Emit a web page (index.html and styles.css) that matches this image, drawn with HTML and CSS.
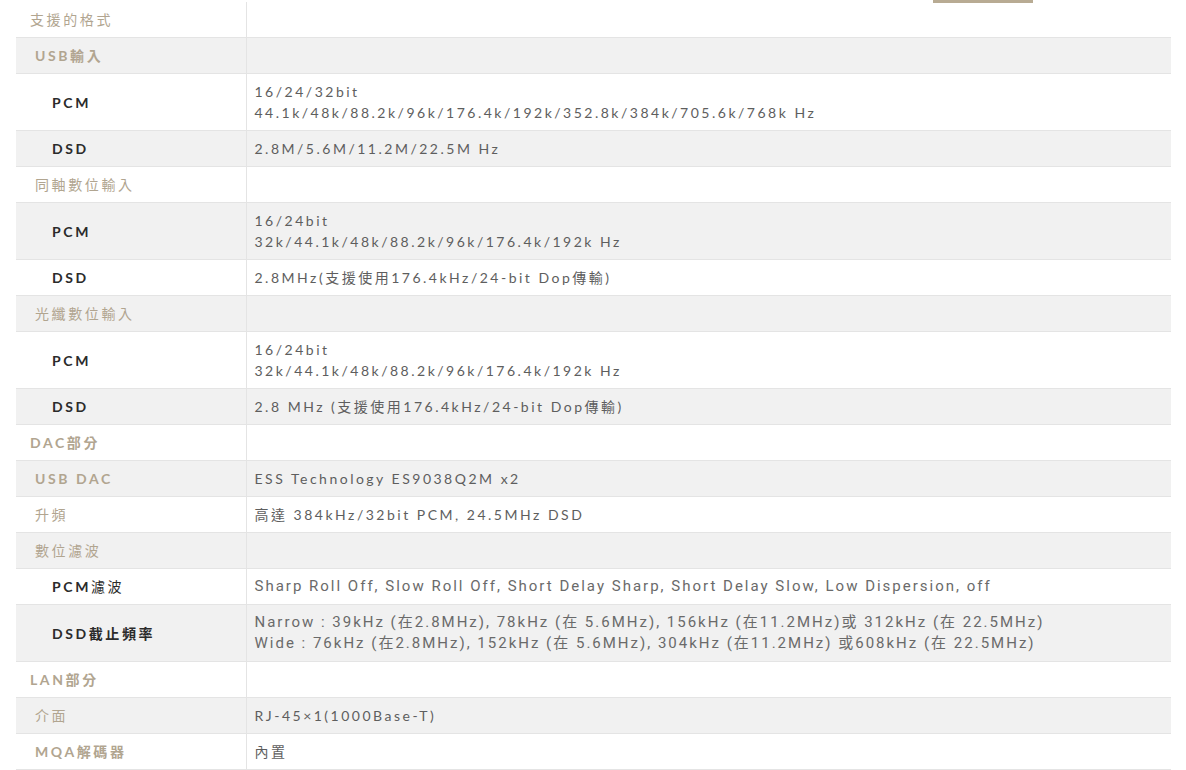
FILE: index.html
```html
<!DOCTYPE html>
<html lang="zh-Hant">
<head>
    <meta charset="UTF-8">
    <meta name="viewport" content="width=device-width, initial-scale=1.0">
    <title>規格</title>
    <link rel="stylesheet" href="styles.css">
</head>
<body>

<div class="tab-marker"></div>

<table class="spec-table">
    <tr class="section">
        <th>支援的格式</th>
        <td></td>
    </tr>
    <tr class="group">
        <th><b>USB輸入</b></th>
        <td></td>
    </tr>
    <tr class="item">
        <th><b>PCM</b></th>
        <td>16/24/32bit<br>44.1k/48k/88.2k/96k/176.4k/192k/352.8k/384k/705.6k/768k Hz</td>
    </tr>
    <tr class="item">
        <th><b>DSD</b></th>
        <td>2.8M/5.6M/11.2M/22.5M Hz</td>
    </tr>
    <tr class="group">
        <th>同軸數位輸入</th>
        <td></td>
    </tr>
    <tr class="item">
        <th><b>PCM</b></th>
        <td>16/24bit<br>32k/44.1k/48k/88.2k/96k/176.4k/192k Hz</td>
    </tr>
    <tr class="item">
        <th><b>DSD</b></th>
        <td>2.8MHz(支援使用176.4kHz/24-bit Dop傳輸)</td>
    </tr>
    <tr class="group">
        <th>光纖數位輸入</th>
        <td></td>
    </tr>
    <tr class="item">
        <th><b>PCM</b></th>
        <td>16/24bit<br>32k/44.1k/48k/88.2k/96k/176.4k/192k Hz</td>
    </tr>
    <tr class="item">
        <th><b>DSD</b></th>
        <td>2.8 MHz (支援使用176.4kHz/24-bit Dop傳輸)</td>
    </tr>
    <tr class="section">
        <th><b>DAC部分</b></th>
        <td></td>
    </tr>
    <tr class="group">
        <th><b>USB DAC</b></th>
        <td>ESS Technology ES9038Q2M x2</td>
    </tr>
    <tr class="group">
        <th>升頻</th>
        <td>高達 384kHz/32bit PCM, 24.5MHz DSD</td>
    </tr>
    <tr class="group">
        <th>數位濾波</th>
        <td></td>
    </tr>
    <tr class="item">
        <th><b>PCM</b>濾波</th>
        <td class="narrow">Sharp Roll Off, Slow Roll Off, Short Delay Sharp, Short Delay Slow, Low Dispersion, off</td>
    </tr>
    <tr class="item">
        <th><b>DSD截止頻率</b></th>
        <td class="narrow">Narrow : 39kHz (在2.8MHz), 78kHz (在 5.6MHz), 156kHz (在11.2MHz)或 312kHz (在 22.5MHz)<br>Wide : 76kHz (在2.8MHz), 152kHz (在 5.6MHz), 304kHz (在11.2MHz) 或608kHz (在 22.5MHz)</td>
    </tr>
    <tr class="section">
        <th><b>LAN部分</b></th>
        <td></td>
    </tr>
    <tr class="group">
        <th>介面</th>
        <td>RJ-45×1(1000Base-T)</td>
    </tr>
    <tr class="group">
        <th><b>MQA解碼器</b></th>
        <td>內置</td>
    </tr>
</table>

</body>
</html>
```

FILE: styles.css
```css
body {
    margin: 0;
    padding: 2px 15px 0 16px;
    background: #fff;
    font-family: Lato, "Noto Sans CJK TC", sans-serif;
    color: #555;
}
.tab-marker {
    position: absolute;
    top: 0;
    left: 933px;
    width: 100px;
    height: 3px;
    background: #b8ab93;
}
.spec-table {
    width: 1155px;
    border-collapse: collapse;
    font-size: 14px;
    line-height: 21px;
}
.spec-table tr:nth-child(even) {
    background: #f1f1f1;
}
.spec-table th,
.spec-table td {
    padding: 7px 8px;
    border-bottom: 1px solid #e4e4e4;
    text-align: left;
    vertical-align: middle;
}
.spec-table th {
    width: 230px;
    box-sizing: border-box;
    border-right: 1px solid #e4e4e4;
    font-weight: 400;
    letter-spacing: 2.6px;
    white-space: nowrap;
}
.spec-table td {
    letter-spacing: 2.5px;
    color: #5e5e5e;
}
.spec-table td.narrow {
    font-family: Roboto, "Noto Sans CJK TC", sans-serif;
    font-size: 15px;
    letter-spacing: 2px;
    color: #6a6a6a;
}
.spec-table th b {
    font-weight: 700;
}
.section th {
    padding-left: 14px;
    color: #b1a590;
}
.group th {
    padding-left: 19px;
    color: #b1a590;
}
.item th {
    padding-left: 36px;
    color: #2b2b2b;
}
```
